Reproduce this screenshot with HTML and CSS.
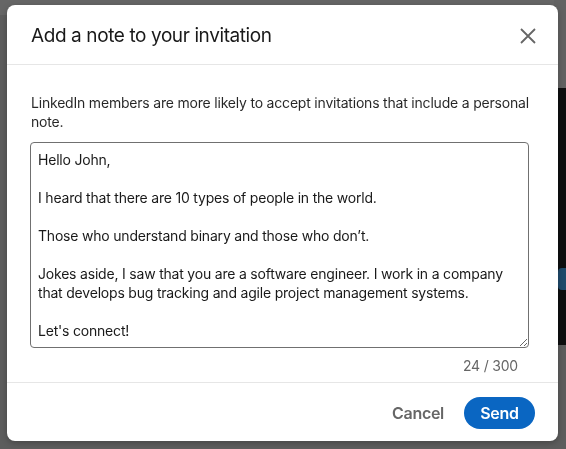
FILE: index.html
```html
<!DOCTYPE html>
<html lang="en">
  <head>
    <meta charset="UTF-8" />
    <meta name="viewport" content="width=device-width, initial-scale=1" />
    <title>Add a note to your invitation</title>
    <link rel="stylesheet" href="styles.css">
  </head>
  <body>
    <div class="page">
      <div class="page-main">
        <div class="page-top"></div>
      </div>
      <div class="page-side">
        <div class="side-top"></div>
        <div class="side-dark">
          <div class="side-button"></div>
        </div>
      </div>
    </div>

    <div class="overlay">
      <div class="modal" role="dialog">
        <div class="modal-header">
          <h2>Add a note to your invitation</h2>
          <button class="close-button" aria-label="Dismiss">
            <svg width="16" height="16" viewBox="0 0 16 16">
              <path d="M1 1 L15 15 M15 1 L1 15" stroke="#666" stroke-width="1.8" fill="none" />
            </svg>
          </button>
        </div>
        <div class="modal-body">
          <p class="hint">LinkedIn members are more likely to accept invitations that include a personal note.</p>
          <textarea class="note" rows="10">Hello John,

I heard that there are 10 types of people in the world.

Those who understand binary and those who don’t.

Jokes aside, I saw that you are a software engineer. I work in a company that develops bug tracking and agile project management systems.

Let's connect!</textarea>
          <div class="counter">24 / 300</div>
        </div>
        <div class="modal-footer">
          <button class="cancel-button">Cancel</button>
          <button class="send-button">Send</button>
        </div>
      </div>
    </div>
  </body>
</html>
```

FILE: styles.css
```css
* {
  margin: 0;
  padding: 0;
  box-sizing: border-box;
}
body {
  background: #5d5d5d;
  font-family: "Inter", "Liberation Sans", sans-serif;
  height: 449px;
  overflow: hidden;
}
.page {
  display: flex;
  height: 100%;
}
.page-main {
  flex: 1;
}
.page-top {
  height: 15px;
  background: #666666;
}
.page-side {
  width: 12px;
}
.side-top {
  height: 88px;
  background: #626262;
}
.side-dark {
  height: 257px;
  background: #0e0f10;
  padding-top: 180px;
}
.side-button {
  height: 22px;
  margin-left: 4px;
  background: #1f4a6b;
  border-radius: 4px 0 0 4px;
}
.overlay {
  position: fixed;
  inset: 0;
  padding: 5px 8px 8px 7px;
}
.modal {
  width: 551px;
  height: 436px;
  background: #fff;
  border-radius: 8px;
  box-shadow: 0 2px 6px rgba(0, 0, 0, 0.25);
  display: flex;
  flex-direction: column;
}
.modal-header {
  height: 60px;
  display: flex;
  align-items: center;
  justify-content: space-between;
  padding: 0 22px 0 24px;
  border-bottom: 1px solid #e6e6e6;
}
.modal-header h2 {
  font-size: 19px;
  font-weight: 400;
  letter-spacing: -0.4px;
  color: rgba(0, 0, 0, 0.9);
  margin-top: 2px;
}
.close-button {
  background: none;
  border: none;
  width: 16px;
  height: 16px;
  display: flex;
  margin-top: 2px;
}
.modal-body {
  padding: 28px 23px 7px 23px;
}
.hint {
  font-size: 14px;
  line-height: 19px;
  letter-spacing: -0.2px;
  color: rgba(0, 0, 0, 0.85);
  margin-left: 1px;
}
.note {
  display: block;
  width: 499px;
  height: 206px;
  margin-top: 11px;
  padding: 7px;
  font-family: "Inter", "Liberation Sans", sans-serif;
  font-size: 14px;
  line-height: 19px;
  letter-spacing: -0.2px;
  color: rgba(0, 0, 0, 0.9);
  border: 1px solid #707070;
  border-radius: 4px;
  outline: none;
  resize: vertical;
}
.counter {
  width: 499px;
  margin-top: 8px;
  padding-right: 11px;
  text-align: right;
  font-size: 14px;
  line-height: 19px;
  letter-spacing: -0.2px;
  color: #666;
}
.modal-footer {
  flex: 1;
  display: flex;
  align-items: center;
  justify-content: flex-end;
  gap: 20px;
  padding: 1px 23px 0 0;
  border-top: 1px solid #e6e6e6;
}
.cancel-button {
  background: none;
  border: none;
  font-family: inherit;
  font-size: 16px;
  font-weight: 600;
  letter-spacing: -0.3px;
  color: #666;
}
.send-button {
  height: 32px;
  width: 71px;
  border: none;
  border-radius: 16px;
  background: #0a66c2;
  color: #fff;
  font-family: inherit;
  font-size: 16px;
  font-weight: 600;
  letter-spacing: -0.3px;
}
```
